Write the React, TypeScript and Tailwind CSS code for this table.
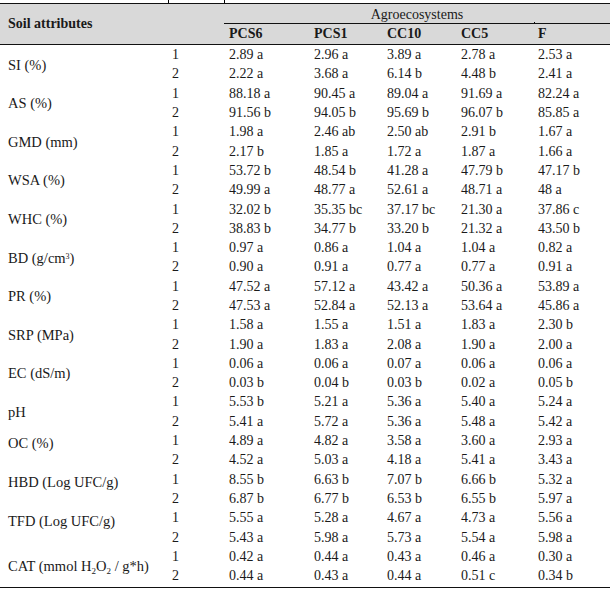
import React from "react";

type Attr = {
  label: React.ReactNode;
  top?: boolean;
  r1: string[];
  r2: string[];
};

const attrs: Attr[] = [
  { label: "SI (%)", r1: ["2.89 a", "2.96 a", "3.89 a", "2.78 a", "2.53 a"], r2: ["2.22 a", "3.68 a", "6.14 b", "4.48 b", "2.41 a"] },
  { label: "AS (%)", r1: ["88.18 a", "90.45 a", "89.04 a", "91.69 a", "82.24 a"], r2: ["91.56 b", "94.05 b", "95.69 b", "96.07 b", "85.85 a"] },
  { label: "GMD (mm)", r1: ["1.98 a", "2.46 ab", "2.50 ab", "2.91 b", "1.67 a"], r2: ["2.17 b", "1.85 a", "1.72 a", "1.87 a", "1.66 a"] },
  { label: "WSA (%)", r1: ["53.72 b", "48.54 b", "41.28 a", "47.79 b", "47.17 b"], r2: ["49.99 a", "48.77 a", "52.61 a", "48.71 a", "48 a"] },
  { label: "WHC (%)", r1: ["32.02 b", "35.35 bc", "37.17 bc", "21.30 a", "37.86 c"], r2: ["38.83 b", "34.77 b", "33.20 b", "21.32 a", "43.50 b"] },
  {
    label: (
      <>
        BD (g/cm<sup className="text-[8px]">3</sup>)
      </>
    ),
    r1: ["0.97 a", "0.86 a", "1.04 a", "1.04 a", "0.82 a"],
    r2: ["0.90 a", "0.91 a", "0.77 a", "0.77 a", "0.91 a"],
  },
  { label: "PR (%)", r1: ["47.52 a", "57.12 a", "43.42 a", "50.36 a", "53.89 a"], r2: ["47.53 a", "52.84 a", "52.13 a", "53.64 a", "45.86 a"] },
  { label: "SRP (MPa)", r1: ["1.58 a", "1.55 a", "1.51 a", "1.83 a", "2.30 b"], r2: ["1.90 a", "1.83 a", "2.08 a", "1.90 a", "2.00 a"] },
  { label: "EC (dS/m)", r1: ["0.06 a", "0.06 a", "0.07 a", "0.06 a", "0.06 a"], r2: ["0.03 b", "0.04 b", "0.03 b", "0.02 a", "0.05 b"] },
  { label: "pH", r1: ["5.53 b", "5.21 a", "5.36 a", "5.40 a", "5.24 a"], r2: ["5.41 a", "5.72 a", "5.36 a", "5.48 a", "5.42 a"] },
  { label: "OC (%)", top: true, r1: ["4.89 a", "4.82 a", "3.58 a", "3.60 a", "2.93 a"], r2: ["4.52 a", "5.03 a", "4.18 a", "5.41 a", "3.43 a"] },
  { label: "HBD (Log UFC/g)", top: true, r1: ["8.55 b", "6.63 b", "7.07 b", "6.66 b", "5.32 a"], r2: ["6.87 b", "6.77 b", "6.53 b", "6.55 b", "5.97 a"] },
  { label: "TFD (Log UFC/g)", top: true, r1: ["5.55 a", "5.28 a", "4.67 a", "4.73 a", "5.56 a"], r2: ["5.43 a", "5.98 a", "5.73 a", "5.54 a", "5.98 a"] },
  {
    label: (
      <>
        CAT (mmol H<sub className="text-[9px]">2</sub>O<sub className="text-[9px]">2</sub> / g*h)
      </>
    ),
    r1: ["0.42 a", "0.44 a", "0.43 a", "0.46 a", "0.30 a"],
    r2: ["0.44 a", "0.43 a", "0.44 a", "0.51 c", "0.34 b"],
  },
];

const systems = ["PCS6", "PCS1", "CC10", "CC5", "F"];

// widths of the five agroecosystem columns
const sysCols = "grid grid-cols-[85px_73px_74px_77px_77px]";
const bodyCols = "grid grid-cols-[165px_59px_85px_73px_74px_77px_77px]";

export default function App() {
  return (
    <div
      className="relative w-[614px] h-[589px] bg-white text-[#1a1a1a] text-[14px] leading-none"
      style={{ fontFamily: '"Liberation Serif", "Times New Roman", serif' }}
    >
      {/* little ticks from the scanned table */}
      <div className="absolute left-[168px] top-0 w-px h-[3px] bg-black" />
      <div className="absolute left-[224px] top-0 w-px h-[3px] bg-black" />
      <div className="absolute left-[534px] top-[22px] w-px h-px bg-black" />

      <div className="w-[610px] pt-[3px]">
        {/* Header */}
        <div className="flex h-[41.5px] bg-[#d9d9d9] border-t-[1.5px] border-b border-[#111]">
          <div className="w-[224px] flex items-center pl-[8px] text-[14px] font-bold">
            Soil attributes
          </div>
          <div className="flex-1 flex flex-col">
            <div className="h-[20px] flex items-center justify-center border-b border-[#111] pt-[2px]">
              Agroecosystems
            </div>
            <div className={`${sysCols} flex-1`}>
              {systems.map((s) => (
                <div key={s} className="flex items-center pl-[5px] font-bold pt-[1px]">
                  {s}
                </div>
              ))}
            </div>
          </div>
        </div>

        {/* Body */}
        <div className={`${bodyCols} auto-rows-[19.3px] pt-[1px] pb-[1px] border-b-[1.5px] border-[#111]`}>
          {attrs.map((a, i) => (
            <React.Fragment key={i}>
              <div
                className={`row-span-2 flex pl-[8px] text-[14.5px] ${a.top ? "items-start pt-[5px]" : "items-center"}`}
              >
                <span>{a.label}</span>
              </div>
              <div className="flex items-center pl-[7px]">1</div>
              {a.r1.map((v, j) => (
                <div key={j} className="flex items-center pl-[5px]">
                  {v}
                </div>
              ))}
              <div className="flex items-center pl-[7px]">2</div>
              {a.r2.map((v, j) => (
                <div key={j} className="flex items-center pl-[5px]">
                  {v}
                </div>
              ))}
            </React.Fragment>
          ))}
        </div>
      </div>
    </div>
  );
}
